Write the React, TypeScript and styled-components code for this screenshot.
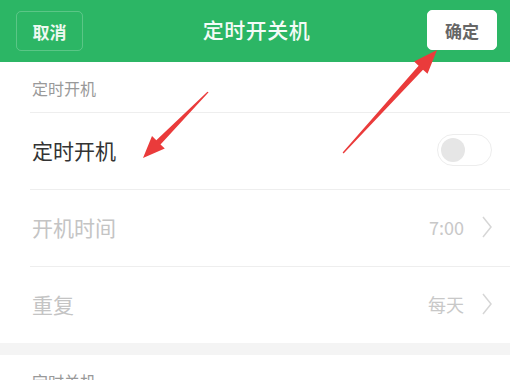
import React from "react";
import styled, { createGlobalStyle } from "styled-components";

const Global = createGlobalStyle`
  html, body { margin: 0; padding: 0; background: #ffffff; }
  body { font-family: "Noto Sans CJK SC", "Noto Sans", sans-serif; }
`;

const Page = styled.div`
  position: relative;
  width: 510px;
  height: 380px;
  overflow: hidden;
  background: #ffffff;
`;

const Header = styled.header`
  height: 62px;
  background: #2cb665;
  display: grid;
  grid-template-columns: 1fr auto 1fr;
  align-items: center;
  padding: 0 13px 0 16px;
  box-sizing: border-box;
`;

const HeaderButton = styled.button<{ $primary?: boolean }>`
  justify-self: ${(p) => (p.$primary ? "end" : "start")};
  width: ${(p) => (p.$primary ? 70 : 67)}px;
  height: 40px;
  margin-top: ${(p) => (p.$primary ? -2 : 0)}px;
  border-radius: 5px;
  border: 1px solid ${(p) => (p.$primary ? "#ffffff" : "rgba(255,255,255,0.22)")};
  background: ${(p) => (p.$primary ? "#ffffff" : "transparent")};
  color: ${(p) => (p.$primary ? "#666666" : "#eef9f2")};
  font-family: inherit;
  font-size: 17px;
  font-weight: 600;
  padding: 0;
  line-height: 1;
`;

const Title = styled.h1`
  margin: -4px 0 0;
  font-size: 21px;
  font-weight: 500;
  color: #f4fbf7;
  letter-spacing: 0.5px;
`;

const SectionLabel = styled.div`
  height: 50px;
  display: flex;
  align-items: center;
  padding-left: 32px;
  padding-top: 2px;
  box-sizing: border-box;
  font-size: 16px;
  color: #999999;
`;

const Divider = styled.div`
  height: 1px;
  margin-left: 30px;
  background: #eeeeee;
`;

const Row = styled.div`
  height: 76px;
  display: flex;
  align-items: center;
  justify-content: space-between;
  padding: 0 18px 2px 32px;
  box-sizing: border-box;
`;

const RowLabel = styled.span<{ $disabled?: boolean }>`
  font-size: 21px;
  color: ${(p) => (p.$disabled ? "#c4c4c4" : "#333333")};
`;

const RowRight = styled.div`
  display: flex;
  align-items: center;
  gap: 18px;
`;

const RowValue = styled.span`
  font-size: 18px;
  color: #c8c8c8;
`;

const Toggle = styled.div`
  width: 55px;
  height: 32px;
  border-radius: 16px;
  border: 1.5px solid #ededed;
  box-sizing: border-box;
  display: flex;
  align-items: center;
  padding-left: 3px;
`;

const Knob = styled.div`
  width: 24px;
  height: 24px;
  border-radius: 50%;
  background: #e6e6e6;
`;

const GrayBand = styled.div`
  height: 12px;
  background: #f4f4f4;
`;

const Overlay = styled.svg`
  position: absolute;
  left: 0;
  top: 0;
  pointer-events: none;
`;

const Chevron = () => (
  <svg width="10" height="22" viewBox="0 0 10 22">
    <path d="M1 1 L9 11 L1 21" fill="none" stroke="#d6d6d6" strokeWidth="1.5" />
  </svg>
);

export default function App() {
  return (
    <Page>
      <Global />
      <Header>
        <HeaderButton>取消</HeaderButton>
        <Title>定时开关机</Title>
        <HeaderButton $primary>确定</HeaderButton>
      </Header>

      <SectionLabel>定时开机</SectionLabel>
      <Divider />
      <Row>
        <RowLabel>定时开机</RowLabel>
        <Toggle>
          <Knob />
        </Toggle>
      </Row>
      <Divider />
      <Row>
        <RowLabel $disabled>开机时间</RowLabel>
        <RowRight>
          <RowValue>7:00</RowValue>
          <Chevron />
        </RowRight>
      </Row>
      <Divider />
      <Row>
        <RowLabel $disabled>重复</RowLabel>
        <RowRight>
          <RowValue>每天</RowValue>
          <Chevron />
        </RowRight>
      </Row>
      <GrayBand />
      <SectionLabel>定时关机</SectionLabel>

      <Overlay width="510" height="380" viewBox="0 0 510 380">
        <polygon
          fill="#ea3b3b"
          points="208.6,92.2 160.5,144.4 164.8,148.6 143,158 152,136 156.3,140.2 207.4,91.8"
        />
        <polygon
          fill="#ea3b3b"
          points="342.6,152.6 418.6,65.7 414.1,61.6 437,50 427.5,73.8 423,69.7 343.6,153.4"
        />
      </Overlay>
    </Page>
  );
}
